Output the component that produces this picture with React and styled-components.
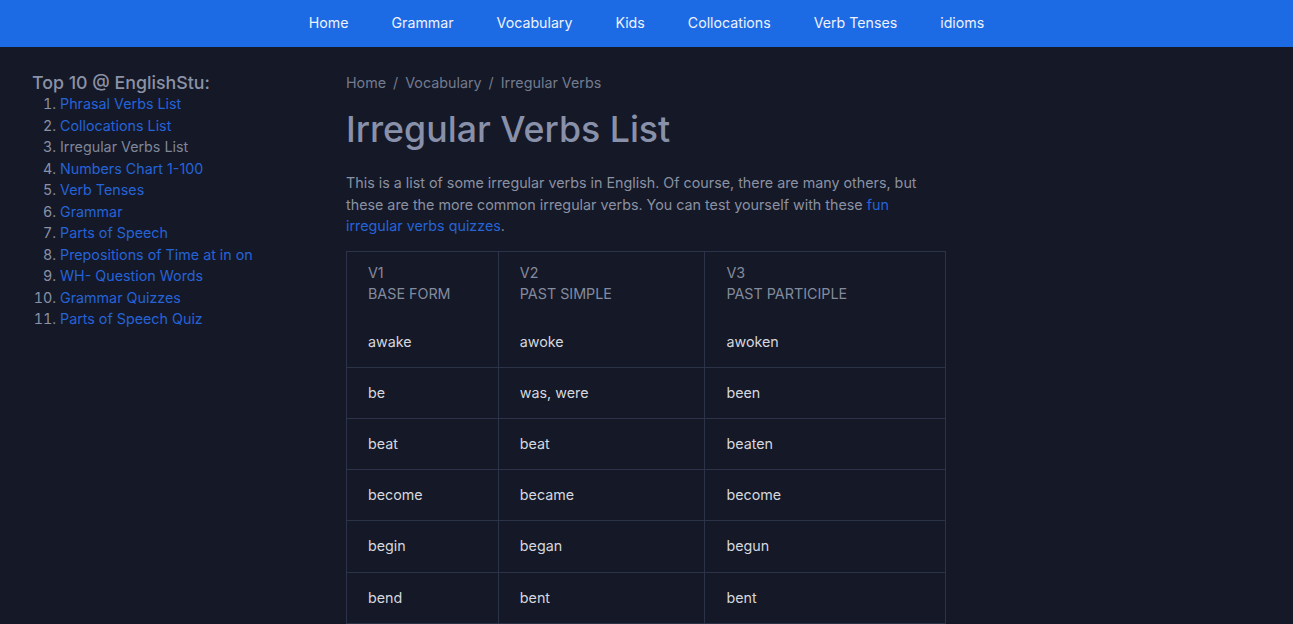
import React from 'react'
import styled, { createGlobalStyle } from 'styled-components'

const GlobalStyle = createGlobalStyle`
  html, body {
    margin: 0;
    padding: 0;
    background: #151826;
    font-family: Inter, "Noto Sans", sans-serif;
  }
`

const navItems = ['Home', 'Grammar', 'Vocabulary', 'Kids', 'Collocations', 'Verb Tenses', 'idioms']

const topTen = [
  { label: 'Phrasal Verbs List' },
  { label: 'Collocations List' },
  { label: 'Irregular Verbs List', current: true },
  { label: 'Numbers Chart 1-100' },
  { label: 'Verb Tenses' },
  { label: 'Grammar' },
  { label: 'Parts of Speech' },
  { label: 'Prepositions of Time at in on' },
  { label: 'WH- Question Words' },
  { label: 'Grammar Quizzes' },
  { label: 'Parts of Speech Quiz' },
]

const verbs = [
  ['awake', 'awoke', 'awoken'],
  ['be', 'was, were', 'been'],
  ['beat', 'beat', 'beaten'],
  ['become', 'became', 'become'],
  ['begin', 'began', 'begun'],
  ['bend', 'bent', 'bent'],
  ['bet', 'bet', 'bet'],
]

const columns = [
  { num: 'V1', name: 'BASE FORM', width: 152 },
  { num: 'V2', name: 'PAST SIMPLE', width: 207 },
  { num: 'V3', name: 'PAST PARTICIPLE', width: 241 },
]

const App = () => {
  return (
    <>
      <GlobalStyle />
      <Navbar>
        {navItems.map((item) => (
          <NavLink key={item} href="#">{item}</NavLink>
        ))}
      </Navbar>
      <Page>
        <Sidebar>
          <SideTitle>Top 10 @ EnglishStu:</SideTitle>
          <TopList>
            {topTen.map((item) => (
              <li key={item.label}>
                <TopLink href="#" $current={item.current}>{item.label}</TopLink>
              </li>
            ))}
          </TopList>
        </Sidebar>
        <Main>
          <Breadcrumb>
            <Crumb href="#">Home</Crumb>
            <Sep>/</Sep>
            <Crumb href="#">Vocabulary</Crumb>
            <Sep>/</Sep>
            <Crumb href="#">Irregular Verbs</Crumb>
          </Breadcrumb>
          <Title>Irregular Verbs List</Title>
          <Intro>
            This is a list of some irregular verbs in English. Of course, there are many others, but
            these are the more common irregular verbs. You can test yourself with these{' '}
            <InlineLink href="#">fun irregular verbs quizzes</InlineLink>.
          </Intro>
          <VerbTable>
            <thead>
              <tr>
                {columns.map((col) => (
                  <Th key={col.num} $width={col.width}>
                    {col.num}
                    <br />
                    {col.name}
                  </Th>
                ))}
              </tr>
            </thead>
            <tbody>
              {verbs.map((row) => (
                <tr key={row[0]}>
                  {row.map((cell, i) => (
                    <Td key={i}>{cell}</Td>
                  ))}
                </tr>
              ))}
            </tbody>
          </VerbTable>
        </Main>
      </Page>
    </>
  )
}

export default App

// Styled Components Styles
const Navbar = styled.nav`
  height: 47px;
  background: #1d6ae5;
  display: flex;
  justify-content: center;
  align-items: center;
`

const NavLink = styled.a`
  color: #eef2fb;
  text-decoration: none;
  font-size: 14.2px;
  padding: 0 21.5px 2px;
  line-height: 45px;
`

const Page = styled.div`
  display: grid;
  grid-template-columns: 282px 600px;
  column-gap: 32px;
  padding: 0 32px;
`

const Sidebar = styled.aside`
  padding-top: 26px;
`

const SideTitle = styled.h3`
  margin: 0;
  font-size: 17.8px;
  font-weight: 500;
  line-height: 20px;
  color: #8a92a6;
`

const TopList = styled.ol`
  margin: 0;
  padding-left: 28px;
  font-size: 14.3px;
  line-height: 21.5px;
  color: #8a92a6;
`

const TopLink = styled.a`
  color: ${(p) => (p.$current ? '#7f879b' : '#2563d8')};
  text-decoration: none;
`

const Main = styled.main`
  padding-top: 25px;
  min-width: 0;
`

const Breadcrumb = styled.div`
  font-size: 14.3px;
  line-height: 22px;
  color: #737b8f;
  display: flex;
  align-items: center;
  gap: 7px;
`

const Crumb = styled.a`
  color: #737b8f;
  text-decoration: none;
`

const Sep = styled.span`
  color: #737b8f;
`

const Title = styled.h1`
  margin: 13px 0 21px;
  font-size: 35.7px;
  line-height: 44px;
  font-weight: 500;
  color: #8891a9;
`

const Intro = styled.p`
  margin: 0 0 14px;
  font-size: 14.3px;
  line-height: 21.5px;
  color: #8a91a3;
  max-width: 580px;
`

const InlineLink = styled.a`
  color: #2563d8;
  text-decoration: none;
`

const VerbTable = styled.table`
  width: 600px;
  border-collapse: separate;
  border-spacing: 0;
  border-top: 1px solid #2c3248;
  border-left: 1px solid #2c3248;
  font-size: 14.3px;
`

const Th = styled.th`
  width: ${(p) => p.$width}px;
  box-sizing: border-box;
  text-align: left;
  font-weight: 400;
  color: #838b9f;
  line-height: 21px;
  padding: 10px 21px 13px;
  border-right: 1px solid #2c3248;
`

const Td = styled.td`
  color: #d4d7df;
  line-height: 24.2px;
  padding: 13px 21px;
  border-right: 1px solid #2c3248;
  border-bottom: 1px solid #2c3248;
`
